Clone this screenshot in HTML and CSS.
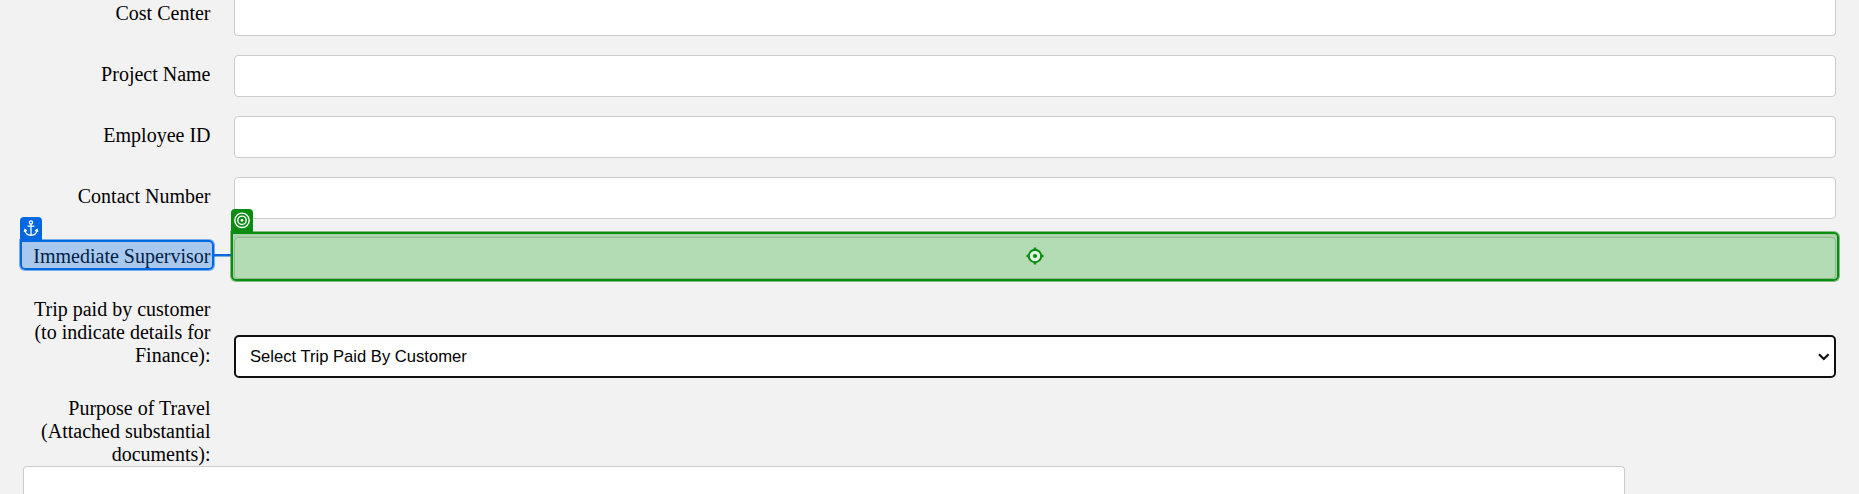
FILE: index.html
```html
<!DOCTYPE html>
<html lang="en">
<head>
<meta charset="utf-8">
<title>Travel Request</title>
<link rel="stylesheet" href="styles.css">
</head>
<body>
<main class="form">
  <div class="row first"><div class="label">Cost Center</div><div class="field"></div></div>
  <div class="row"><div class="label">Project Name</div><div class="field"></div></div>
  <div class="row"><div class="label">Employee ID</div><div class="field"></div></div>
  <div class="row"><div class="label">Contact Number</div><div class="field"></div></div>
  <div class="row supervisor"><div class="label">Immediate Supervisor</div><div class="field"></div></div>
  <div class="row trip">
    <div class="label">Trip paid by customer (to indicate details for Finance):</div>
    <div class="select"><span>Select Trip Paid By Customer</span>
      <svg class="chevron" viewBox="0 0 12 8"><path d="M1 1.2 5.8 6 10.6 1.2" fill="none" stroke="#101010" stroke-width="2.2"/></svg>
    </div>
  </div>
  <div class="row purpose"><div class="label">Purpose of Travel (Attached substantial documents):</div></div>
  <div class="textarea"></div>
</main>
<div class="connector"></div>
<div class="mark anchor"></div>
<div class="badge anchor-badge">
  <svg viewBox="0 0 22 22" fill="none" stroke="#fff" stroke-width="1.3"><circle cx="11" cy="5.4" r="1.6"/><path d="M11 7v11.2M7.6 9.2h6.8M4.9 12.600c.2 3.400 2.600 5.500 6.100 5.700 3.500-.2 5.900-2.300 6.100-5.700M4.300 14.800l.6-2.300 2 1.400M17.700 14.800l-.6-2.300-2 1.400"/></svg>
</div>
<div class="mark target">
  <svg viewBox="0 0 18 18"><circle cx="9" cy="9" r="6.200" fill="#e2f2e2" stroke="#098c10" stroke-width="2"/><path d="M9 .5V3.500M9 14.500v3M.5 9H3.500M14.500 9h3" stroke="#098c10" stroke-width="2.400"/><circle cx="9" cy="9" r="2.100" fill="#098c10"/></svg>
</div>
<div class="badge target-badge">
  <svg viewBox="0 0 22 22" fill="none" stroke="#fff" stroke-width="1.400"><circle cx="11" cy="11.300" r="7.200"/><circle cx="11" cy="11.300" r="4.200"/><circle cx="11" cy="11.300" r="1.400" fill="#fff" stroke="none"/></svg>
</div>
</body>
</html>
```
FILE: styles.css
```css
* { box-sizing: border-box; }
body {
  margin: 0;
  height: 494px;
  overflow: hidden;
  position: relative;
  background: #f2f2f2;
  color: #000;
  font: 20px/23px "Liberation Serif", "Times New Roman", serif;
}
.row { display: flex; height: 42px; margin-bottom: 19px; padding-right: 23px; }
.label { width: 210.5px; margin-right: 23.5px; padding: 8px 0 0 23px; text-align: right; flex: none; }
.field { flex: 1; background: #fff; border: 1px solid #ccc; border-radius: 4px; }
.first { height: 36px; }
.first .label { padding-top: 2px; }
.first .field { border-top: 0; border-radius: 0 0 4px 4px; }
.supervisor { margin-top: -1px; margin-bottom: 19px; }
.trip { height: 80px; align-items: flex-end; }
.trip .label, .purpose .label { padding-top: 0; align-self: flex-start; }
.select {
  flex: 1;
  height: 43px;
  display: flex;
  align-items: center;
  justify-content: space-between;
  padding: 0 4px 0 14px;
  background: #fff;
  border: 2px solid #101010;
  border-radius: 5px;
  font: 16.6px "Liberation Sans", Arial, sans-serif;
}
.chevron { width: 12px; height: 8px; }
.purpose { height: 69px; margin-bottom: 0; }
.textarea { margin-left: 23px; width: 1602px; height: 28px; background: #fff; border: 1px solid #ccc; border-bottom: 0; border-radius: 4px 4px 0 0; }

/* Annotation layer over the form */
.mark, .badge, .connector { position: absolute; }
.mark { border: 2px solid; border-radius: 0 5px 5px 5px; display: flex; justify-content: center; }
.badge { width: 22px; height: 23px; border-radius: 4px 4px 0 0; }
.badge svg { display: block; width: 22px; height: 22px; }
.anchor { left: 20px; top: 240px; width: 194px; height: 30px; border-color: #0068e0; background: rgba(0, 104, 224, .3); box-shadow: 0 0 0 1px rgba(0, 104, 224, .5); }
.anchor-badge { left: 20px; top: 217px; background: #0068e0; }
.connector { left: 214px; top: 254px; width: 17px; height: 2px; background: #0068e0; box-shadow: 0 1px rgba(0, 104, 224, .5); }
.target { left: 231px; top: 232px; width: 1608px; height: 49px; border-color: #098c10; background: rgba(4, 140, 10, .3); box-shadow: 0 0 0 1px rgba(9, 140, 16, .5); }
.target svg { width: 18px; height: 18px; margin: 13px 1px 0 0; }
.target-badge { left: 231px; top: 209px; background: #098c10; }
```
